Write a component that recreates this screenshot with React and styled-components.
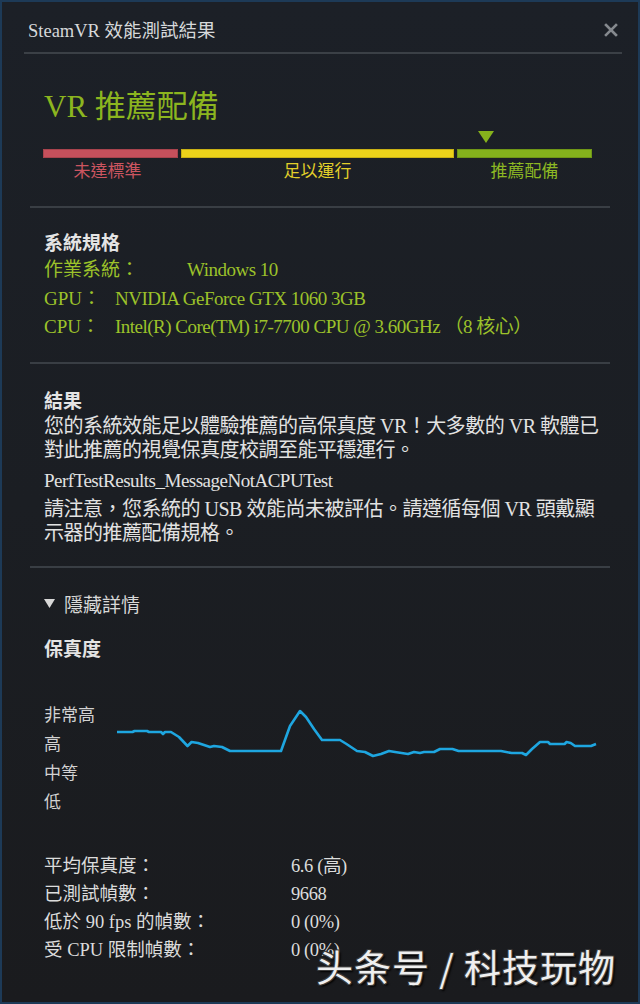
import React from "react";
import styled, { createGlobalStyle } from "styled-components";

const GlobalStyle = createGlobalStyle`
  html, body { margin: 0; padding: 0; background: #1a1b1e; }
  body { font-family: "Liberation Serif", "Noto Sans CJK TC", serif; }
  * { box-sizing: border-box; }
`;

const FONT = `"Liberation Serif", "Noto Sans CJK TC", serif`;

const Window = styled.div`
  position: relative;
  width: 640px;
  height: 1004px;
  border: 2px solid #1d3a57;
  background: linear-gradient(180deg, #1c2027 0%, #1b1e23 50%, #1a1b1e 100%);
  font-family: ${FONT};
  overflow: hidden;
`;

const Header = styled.div`
  height: 50px;
  display: flex;
  align-items: center;
  justify-content: space-between;
  padding: 0 20px 0 26px;
`;

const Title = styled.div`
  font-size: 18.5px;
  color: #d6d8da;
  padding-top: 4px;
`;

const CloseButton = styled.button`
  background: none;
  border: 0;
  padding: 0;
  width: 14px;
  height: 14px;
  display: flex;
  margin-top: 6px;
  cursor: pointer;
`;

const HeaderRule = styled.div`
  height: 2px;
  margin: 0 16px 0 22px;
  background: #3b4046;
`;

const Content = styled.div`
  padding: 0 28px;
`;

const Section = styled.section`
  padding: ${(p) => p.$pad || "20px 0 22px 14px"};
  border-bottom: ${(p) => (p.$last ? "none" : "2px solid #393e44")};
`;

const BigTitle = styled.h1`
  margin: 0;
  font-weight: normal;
  font-size: 31px;
  line-height: 36px;
  color: #8cb51f;
`;

const Meter = styled.div`
  margin-top: 4px;
  margin-left: -1px;
  display: grid;
  grid-template-columns: 135px 273px 135px;
  column-gap: 3px;
`;

const MarkerCell = styled.div`
  grid-column: ${(p) => p.$col};
  height: 20px;
  display: flex;
  align-items: flex-end;
  padding-bottom: 6px;
`;

const Segment = styled.div`
  height: 9px;
  background: ${(p) => p.$color};
  border: 1px solid ${(p) => p.$edge};
`;

const SegLabel = styled.div`
  text-align: center;
  font-size: 17px;
  line-height: 24px;
  color: ${(p) => p.$color};
  font-family: "Noto Sans CJK TC", sans-serif;
`;

const Heading = styled.h2`
  margin: 0;
  font-size: 19px;
  line-height: 28px;
  font-weight: bold;
  color: #e4e4e4;
  font-family: "Noto Sans CJK TC", sans-serif;
`;

const SpecRow = styled.div`
  display: flex;
  font-size: 19px;
  line-height: 28.5px;
  color: #9cc22a;
`;

const SpecValue = styled.span`
  margin-left: ${(p) => p.$gap}px;
  letter-spacing: -0.5px;
`;

const Para = styled.p`
  margin: ${(p) => p.$mt || 0}px 0 0 0;
  font-size: 20px;
  line-height: 24px;
  color: #e2e2e2;
  letter-spacing: -0.5px;
`;

const Code = styled.span`
  letter-spacing: -0.5px;
  font-size: 19px;
`;

const Toggle = styled.div`
  display: flex;
  align-items: center;
  gap: 9px;
  font-size: 19px;
  line-height: 28px;
  color: #d8d8d8;
  font-family: "Noto Sans CJK TC", sans-serif;
`;

const ChartHeading = styled(Heading)`
  margin-top: 16px;
`;

const Chart = styled.div`
  margin-top: 37px;
  display: grid;
  grid-template-columns: 73px 483px;
`;

const AxisLabels = styled.div`
  display: flex;
  flex-direction: column;
`;

const AxisLabel = styled.div`
  font-size: 17px;
  line-height: 29px;
  color: #d2d2d2;
  font-family: "Noto Sans CJK TC", sans-serif;
`;

const Stats = styled.div`
  margin-top: 37px;
  display: grid;
  grid-template-columns: 247px auto;
  font-size: 18.5px;
  line-height: 28px;
  color: #dcdcdc;
`;

const StatValue = styled.span`
  letter-spacing: -0.4px;
`;

const Watermark = styled.div`
  position: absolute;
  right: 22px;
  bottom: 12px;
  font-family: "Noto Sans CJK SC", sans-serif;
  font-size: 37px;
  line-height: 48px;
  color: #efefef;
  text-shadow: 1px 1px 0 #3a3a3a, -1px -1px 0 #3a3a3a, 1px -1px 0 #3a3a3a, -1px 1px 0 #3a3a3a, 2px 2px 2px #000;
  letter-spacing: 1px;
`;

const points = [
  [0,33],[15.5,33],[17.5,32],[30,32],[32,33],[44,33],[46,35],[48,33],[54,33],[62,38],[70.5,47],[74.6,43],[81,44],[87,46],[93,48],[97,47],[105,48],[113,52],[164,52],[173,27],[183,12],[189,18],[197,30],[205,41],[223,41],[229.5,45],[240,52],[248,53],[256,57],[264,55],[272,52],[278,53],[291,55],[297,53],[303,54],[307,53],[317,53],[323,50],[335.5,50],[341.6,52],[384,52],[394.6,54],[405,54],[409,56],[415,50],[423,43],[431,43],[433,45],[447.6,45],[449.6,43],[453.7,44],[458,47],[474,47],[479,45]
];

export default function App() {
  return (
    <>
      <GlobalStyle />
      <Window>
        <Header>
          <Title>SteamVR 效能測試結果</Title>
          <CloseButton aria-label="close">
            <svg width="14" height="14" viewBox="0 0 14 14">
              <path d="M2 2 L12 12 M12 2 L2 12" stroke="#85898e" strokeWidth="2.6" strokeLinecap="square" />
            </svg>
          </CloseButton>
        </Header>
        <HeaderRule />
        <Content>
          <Section $pad="35px 0 24px 14px">
            <BigTitle>VR 推薦配備</BigTitle>
            <Meter>
              <MarkerCell $col={3}>
                <svg width="16" height="12" viewBox="0 0 16 12" style={{ marginLeft: 21 }}>
                  <polygon points="0,0 16,0 8,12" fill="#86b21c" />
                </svg>
              </MarkerCell>
              <Segment $color="#c6505c" $edge="#a8434d" />
              <Segment $color="#ecd21a" $edge="#c8b015" />
              <Segment $color="#84b21c" $edge="#6f9617" />
              <SegLabel $color="#cc5560" style={{ marginLeft: -6 }}>未達標準</SegLabel>
              <SegLabel $color="#e2cf2a">足以運行</SegLabel>
              <SegLabel $color="#8cb823">推薦配備</SegLabel>
            </Meter>
          </Section>

          <Section $pad="20px 0 20px 14px">
            <Heading>系統規格</Heading>
            <SpecRow><span>作業系統：</span><SpecValue $gap={48}>Windows 10</SpecValue></SpecRow>
            <SpecRow><span>GPU：</span><SpecValue $gap={14}>NVIDIA GeForce GTX 1060 3GB</SpecValue></SpecRow>
            <SpecRow><span>CPU：</span><SpecValue $gap={15}>Intel(R) Core(TM) i7-7700 CPU @ 3.60GHz （8 核心）</SpecValue></SpecRow>
          </Section>

          <Section $pad="22px 0 21px 14px">
            <Heading>結果</Heading>
            <Para>您的系統效能足以體驗推薦的高保真度 VR！大多數的 VR 軟體已對此推薦的視覺保真度校調至能平穩運行。</Para>
            <Para $mt={6}><Code>PerfTestResults_MessageNotACPUTest</Code></Para>
            <Para $mt={4}>請注意，您系統的 USB 效能尚未被評估。請遵循每個 VR 頭戴顯示器的推薦配備規格。</Para>
          </Section>

          <Section $pad="22px 0 0 14px" $last>
            <Toggle>
              <svg width="11" height="9" viewBox="0 0 11 9">
                <polygon points="0,0 11,0 5.5,9" fill="#d8d8d8" />
              </svg>
              <span>隱藏詳情</span>
            </Toggle>
            <ChartHeading>保真度</ChartHeading>
            <Chart>
              <AxisLabels>
                <AxisLabel>非常高</AxisLabel>
                <AxisLabel>高</AxisLabel>
                <AxisLabel>中等</AxisLabel>
                <AxisLabel>低</AxisLabel>
              </AxisLabels>
              <svg width="483" height="116" viewBox="0 0 483 116">
                <polyline
                  points={points.map((p) => p.join(",")).join(" ")}
                  fill="none"
                  stroke="#1ea6e0"
                  strokeWidth="2.6"
                  strokeLinejoin="round"
                />
              </svg>
            </Chart>
            <Stats>
              <span>平均保真度：</span><StatValue>6.6 (高)</StatValue>
              <span>已測試幀數：</span><StatValue>9668</StatValue>
              <span>低於 90 fps 的幀數：</span><StatValue>0 (0%)</StatValue>
              <span>受 CPU 限制幀數：</span><StatValue>0 (0%)</StatValue>
            </Stats>
          </Section>
        </Content>
        <Watermark>头条号 / 科技玩物</Watermark>
      </Window>
    </>
  );
}
